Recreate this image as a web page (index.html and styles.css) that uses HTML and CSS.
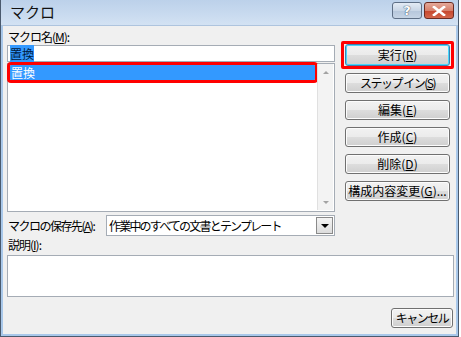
FILE: index.html
```html
<html>
<head>
<title>マクロ</title>
<meta http-equiv="Content-Type" content="text/html; charset=UTF-8">
<link rel="stylesheet" href="styles.css">
</head>
<body>
  <div class="window">
    <div class="titlebar">
      <span class="title">マクロ</span>
      <div class="caption-btns">
        <span class="cap help">?</span>
        <span class="cap close">
          <svg width="14" height="10" viewBox="0 0 14 10"><path d="M2 1 L12 9 M12 1 L2 9" stroke="#fff" stroke-width="2.6" stroke-linecap="square"/></svg>
        </span>
      </div>
    </div>

    <div class="client">
      <div class="top">
        <div class="names">
          <div class="label">マクロ名(<u>M</u>):</div>
          <div class="name-input"><span class="sel-text">置換</span></div>
          <div class="listbox">
            <div class="items">
              <div class="item selected">置換</div>
            </div>
            <div class="scrollbar">
              <span class="arrow up"></span>
              <span class="arrow down"></span>
            </div>
          </div>
        </div>

        <div class="actions">
          <div class="mark"><button class="btn default">実行(<u>R</u>)</button></div>
          <button class="btn kana">ステップ&nbsp;イン(<u>S</u>)</button>
          <button class="btn">編集(<u>E</u>)</button>
          <button class="btn">作成(<u>C</u>)</button>
          <button class="btn">削除(<u>D</u>)</button>
          <button class="btn">構成内容変更(<u>G</u>)...</button>
        </div>
      </div>

      <div class="storage">
        <div class="label storage-label">マクロの保存先(<u>A</u>):</div>
        <div class="combo">
          <span class="combo-text">作業中のすべての文書とテンプレート</span>
          <span class="combo-btn"><span class="arrow dark"></span></span>
        </div>
      </div>

      <div class="label desc-label">説明(<u>I</u>):</div>
      <div class="desc"></div>

      <div class="footer">
        <button class="btn kana cancel">キャンセル</button>
      </div>
    </div>
  </div>
</body>
</html>
```

FILE: styles.css
```css
body {
  margin: 0;
  background: #fff;
  font-family: "Noto Sans CJK JP", "Liberation Sans", sans-serif;
  font-size: 12px;
  color: #000;
}
u { text-decoration: underline; }

.window {
  width: 453px;
  height: 334px;
  border: 1px solid #4a5a6e;
  border-top: 0;
  background: #f0f0f0;
  box-shadow: inset 2px 0 0 #a9c8ea, inset -2px 0 0 #a9c8ea, inset 0 -2px 0 #a9c8ea;
  padding: 0 2px 2px 2px;
  display: flex;
  flex-direction: column;
}

.titlebar {
  height: 26px;
  margin: 0 -2px;
  padding: 0 4px 0 9px;
  display: flex;
  align-items: center;
  justify-content: space-between;
  background: linear-gradient(#bcd1ea, #c8daef 55%, #d3e2f3);
  border-bottom: 1px solid #aec4de;
}
.title {
  font-size: 15px;
  line-height: 18px;
  color: #111;
  margin-top: -2px;
}
.caption-btns {
  display: flex;
  gap: 2px;
  margin-top: -4px;
}
.cap {
  width: 28px;
  height: 15px;
  border: 1px solid #5e6f86;
  border-radius: 3px;
  display: flex;
  align-items: center;
  justify-content: center;
}
.help {
  background: linear-gradient(#e3ebf5, #c9d6e6 50%, #b5c6db 51%, #c6d4e5);
  color: #fff;
  font-family: "DejaVu Sans", sans-serif;
  font-weight: bold;
  font-size: 13px;
  line-height: 15px;
  text-shadow: 0 0 1px #304660, 0 0 1px #304660;
}
.close {
  border-color: #6b2b22;
  background: linear-gradient(#e4a99a, #d7806b 50%, #c6452c 51%, #d3664c);
}

.client {
  flex: 1;
  padding: 4px 2px 6px 4px;
  display: flex;
  flex-direction: column;
}

.label {
  height: 14px;
  line-height: 14px;
  padding-left: 1px;
  white-space: nowrap;
  letter-spacing: -1px;
}

.top {
  display: flex;
  gap: 6px;
}
.names {
  width: 328px;
  display: flex;
  flex-direction: column;
}
.name-input {
  margin-top: 1px;
  height: 15px;
  border: 1px solid #a5acb5;
  background: #fff;
  padding-left: 2px;
  line-height: 15px;
}
.sel-text {
  background: #3399ff;
  color: #001a40;
}
.listbox {
  margin-top: 1px;
  height: 147px;
  border: 1px solid #a5acb5;
  background: #fff;
  display: flex;
}
.items {
  flex: 1;
  padding: 1px 2px;
}
.item {
  height: 15px;
  line-height: 15px;
  padding-left: 1px;
}
.item.selected {
  background: #3399ff;
  color: #fff;
  outline: 3px solid #ff0000;
  border-radius: 1px;
}
.scrollbar {
  width: 15px;
  margin: 0 1px 1px 0;
  border-left: 1px solid #e0e0e0;
  background: #f3f3f3;
  display: flex;
  flex-direction: column;
  justify-content: space-between;
  align-items: center;
  padding: 7px 0 6px;
}
.arrow {
  width: 0;
  height: 0;
  border-left: 3px solid transparent;
  border-right: 3px solid transparent;
}
.arrow.up { border-bottom: 3px solid #a3a3a3; }
.arrow.down { border-top: 3px solid #a3a3a3; }
.arrow.dark { border-left-width: 4px; border-right-width: 4px; border-top: 4px solid #000; }

.actions {
  width: 112px;
  margin-top: 11px;
  display: flex;
  flex-direction: column;
  gap: 7px;
  align-items: flex-end;
}
.mark {
  box-sizing: border-box;
  width: 113px;
  border: 3px solid #ff0000;
  border-radius: 2px;
  padding: 0 1px;
  margin-right: -1px;
  margin-bottom: -3px;
}
.btn {
  width: 105px;
  height: 20px;
  padding: 0;
  margin-right: 3px;
  font-family: inherit;
  font-size: 12px;
  line-height: 14px;
  color: #000;
  white-space: nowrap;
  border: 1px solid #707070;
  border-radius: 3px;
  background: linear-gradient(#f2f2f2, #ebebeb 50%, #dddddd 51%, #cfcfcf);
  box-shadow: inset 0 0 0 1px #fcfcfc;
}
.btn.kana { letter-spacing: -1.5px; }
.btn.default {
  display: block;
  height: 22px;
  margin: 0;
  border-color: #3c7fb1;
  box-shadow: inset 0 0 0 1px #48d7fb;
}

.storage {
  margin-top: 3px;
  display: flex;
  align-items: center;
}
.storage-label { width: 98px; letter-spacing: -1.5px; }
.combo {
  width: 227px;
  height: 19px;
  border: 1px solid #a5acb5;
  background: #fff;
  display: flex;
  align-items: center;
}
.combo-text {
  flex: 1;
  padding-left: 2px;
  font-size: 12px;
  line-height: 16px;
  white-space: nowrap;
  letter-spacing: -1.8px;
}
.combo-btn {
  width: 15px;
  height: 15px;
  margin-right: 1px;
  border: 1px solid #8a8a8a;
  background: linear-gradient(#f4f4f4, #dcdcdc);
  display: flex;
  align-items: center;
  justify-content: center;
}

.desc-label { margin-top: 2px; }
.desc {
  margin-top: 3px;
  height: 40px;
  border: 1px solid #a5acb5;
  background: #fff;
}

.footer {
  margin-top: 11px;
  display: flex;
  justify-content: flex-end;
}
.btn.cancel {
  width: 62px;
  margin-right: 1px;
}
```
